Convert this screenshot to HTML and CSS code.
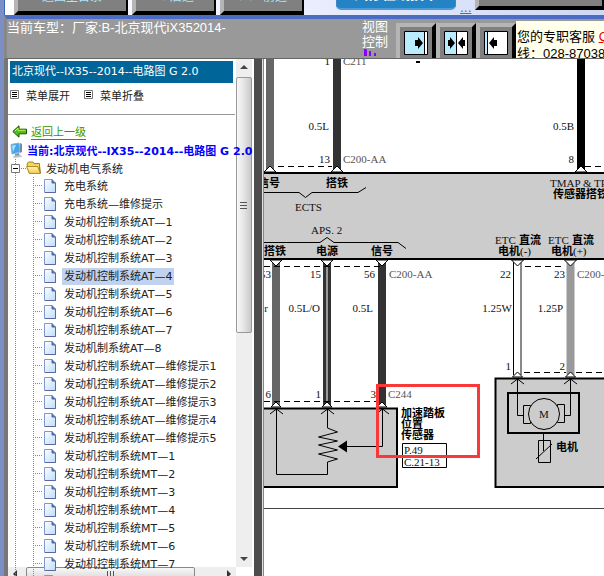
FILE: index.html
```html
<!DOCTYPE html>
<html lang="zh-CN">
<head>
<meta charset="utf-8">
<title>电路图</title>
<link rel="stylesheet" href="styles.css">
</head>
<body>
<svg class="defs" aria-hidden="true">
  <defs>
    <linearGradient id="paper" x1="0" y1="0" x2="1" y2="1"><stop offset="0" stop-color="#fff"/><stop offset="1" stop-color="#bcdcfa"/></linearGradient>
    <linearGradient id="gold" x1="0" y1="0" x2="0" y2="1"><stop offset="0" stop-color="#fff6b8"/><stop offset="1" stop-color="#f0cb4c"/></linearGradient>
    <symbol id="doc" viewBox="0 0 12 14"><path d="M.5.5H8L11.5 4v9.500H.5z" fill="url(#paper)" stroke="#7e97cf"/><path d="M8 .5V4h3.500" fill="#5a75b8" stroke="#4d66aa"/><path d="M11.500 4v9.500H1" fill="none" stroke="#5c66a0"/></symbol>
    <symbol id="list" viewBox="0 0 9 9"><path d="M.5.5h8v8h-8z" fill="#fff" stroke="#777"/><path d="M2 2.500h5M2 4.500h5M2 6.500h5" stroke="#000"/></symbol>
  </defs>
</svg>

<header class="topbar">
  <button class="nav-btn nav-home" type="button">返回主目录</button>
  <button class="nav-btn nav-step" type="button">&lt; 后退</button>
  <button class="nav-btn nav-step" type="button">&gt;&gt; 前进</button>
  <button class="pill" type="button">汽修在线技术</button>
  <a class="more" href="#">...</a>
  <button class="nav-btn nav-wide" type="button" aria-label="菜单"></button>
</header>

<section class="toolbar">
  <p class="model">当前车型：厂家:B-北京现代iX352014-</p>
  <div class="view-label">视图<br>控制
    <svg width="16" height="7" viewBox="0 0 16 7"><path d="M2 0h2l1 1v6H2zM7 2h2v5H7zM12 4h2v3h-2z" fill="#80f"/></svg>
  </div>
  <div class="views">
    <button class="view-btn" type="button" aria-label="左侧视图"><svg width="24" height="24" viewBox="0 0 24 24"><path d="M.5.5h23v23H.5z" fill="#fff" stroke="#000"/><path d="M1 1h19v22H1z" fill="#b9ecff"/><path d="M20.500 1v22" stroke="#000"/><path d="M11 9h3V6l5 6-5 6v-3h-3z"/></svg></button>
    <button class="view-btn" type="button" aria-label="并排视图"><svg width="24" height="24" viewBox="0 0 24 24"><path d="M.5.5h23v23H.5z" fill="#fff" stroke="#000"/><path d="M1 1h11v22H1z" fill="#b9ecff"/><path d="M12.500 1v22" stroke="#000"/><path d="M4 9h2V6l5 6-5 6v-3H4zM21 9h-2V6l-5 6 5 6v-3h2z"/></svg></button>
    <button class="view-btn" type="button" aria-label="右侧视图"><svg width="24" height="24" viewBox="0 0 24 24"><path d="M.5.5h23v23H.5z" fill="#fff" stroke="#000"/><path d="M1 1h2v22H1z" fill="#b9ecff"/><path d="M3.500 1v22" stroke="#000"/><path d="M13 9h-3V6l-5 6 5 6v-3h3z"/></svg></button>
  </div>
  <div class="service">您的专职客服 <a href="#">QQ</a><br>线：028-87038200</div>
</section>

<main class="workspace">
  <nav class="sidebar">
    <div class="side-content">
      <h1>北京现代--IX35--2014--电路图 G 2.0</h1>
      <div class="menu">
        <button type="button"><svg width="9" height="9"><use href="#list"/></svg>菜单展开</button>
        <button type="button"><svg width="9" height="9"><use href="#list"/></svg>菜单折叠</button>
      </div>
      <div class="back">
        <svg width="16" height="13" viewBox="0 0 16 13"><path d="M.8 6.500 7 .8v3.400h7.500v4.600H7v3.400z" fill="#4fc020" stroke="#1b5205"/><path d="M3 6 6 3v2.300h7.500" fill="none" stroke="#c8f24a"/></svg>
        <a href="#">返回上一级</a>
      </div>
      <div class="current">
        <svg width="14" height="17" viewBox="0 0 14 17"><path d="M1 2.500 9 1l1 9-8 2z" fill="#43a5ec" stroke="#8ab0d0"/><path d="M2 3.500 6 3 3 10z" fill="#a8e4ff"/><path d="m10 1 2 1v8l-2 1z" fill="#6f8ba8"/><path d="m5 12 4-1 1 3H5z" fill="#8191a6"/><path d="m3 14 8-1 1 2-8 1z" fill="#b9c5d2"/></svg>
        当前:北京现代--IX35--2014--电路图 G 2.0
      </div>
      <div class="tree">
        <div class="folder">
          <svg class="toggle" width="15" height="9" viewBox="0 0 15 9"><path d="M.5.5h8v8h-8z" fill="#fff" stroke="#777"/><path d="M2 4.500h5" stroke="#000"/><path d="M10 4.500h5" stroke="#888" stroke-dasharray="1 1"/></svg>
          <svg width="16" height="14" viewBox="0 0 16 14"><path d="M1 3 2.500 1H7l1 1.500h5.500V12H3z" fill="#f3d464" stroke="#a98016"/><path d="M.6 5.500h11L14.500 12.500H3.500z" fill="url(#gold)" stroke="#b98d1c"/><path d="M13.500 4.500 14.500 12" stroke="#a98016"/></svg>
          <a href="#">发动机电气系统</a>
        </div>
        <ul>
          <li><svg class="doc"><use href="#doc"/></svg><a href="#">充电系统</a></li>
          <li><svg class="doc"><use href="#doc"/></svg><a href="#">充电系统—维修提示</a></li>
          <li><svg class="doc"><use href="#doc"/></svg><a href="#">发动机控制系统AT—1</a></li>
          <li><svg class="doc"><use href="#doc"/></svg><a href="#">发动机控制系统AT—2</a></li>
          <li><svg class="doc"><use href="#doc"/></svg><a href="#">发动机控制系统AT—3</a></li>
          <li><svg class="doc"><use href="#doc"/></svg><a class="selected" href="#">发动机控制系统AT—4</a></li>
          <li><svg class="doc"><use href="#doc"/></svg><a href="#">发动机控制系统AT—5</a></li>
          <li><svg class="doc"><use href="#doc"/></svg><a href="#">发动机控制系统AT—6</a></li>
          <li><svg class="doc"><use href="#doc"/></svg><a href="#">发动机控制系统AT—7</a></li>
          <li><svg class="doc"><use href="#doc"/></svg><a href="#">发动机制系统AT—8</a></li>
          <li><svg class="doc"><use href="#doc"/></svg><a href="#">发动机控制系统AT—维修提示1</a></li>
          <li><svg class="doc"><use href="#doc"/></svg><a href="#">发动机控制系统AT—维修提示2</a></li>
          <li><svg class="doc"><use href="#doc"/></svg><a href="#">发动机控制系统AT—维修提示3</a></li>
          <li><svg class="doc"><use href="#doc"/></svg><a href="#">发动机控制系统AT—维修提示4</a></li>
          <li><svg class="doc"><use href="#doc"/></svg><a href="#">发动机控制系统AT—维修提示5</a></li>
          <li><svg class="doc"><use href="#doc"/></svg><a href="#">发动机控制系统MT—1</a></li>
          <li><svg class="doc"><use href="#doc"/></svg><a href="#">发动机控制系统MT—2</a></li>
          <li><svg class="doc"><use href="#doc"/></svg><a href="#">发动机控制系统MT—3</a></li>
          <li><svg class="doc"><use href="#doc"/></svg><a href="#">发动机控制系统MT—4</a></li>
          <li><svg class="doc"><use href="#doc"/></svg><a href="#">发动机控制系统MT—5</a></li>
          <li><svg class="doc"><use href="#doc"/></svg><a href="#">发动机控制系统MT—6</a></li>
          <li><svg class="doc"><use href="#doc"/></svg><a href="#">发动机控制系统MT—7</a></li>
          <li><svg class="doc"><use href="#doc"/></svg></li>
        </ul>
      </div>
    </div>
    <div class="vbar">
      <svg width="16" height="16" viewBox="0 0 16 16"><path d="m4 10 4-4 4 4z" fill="#444"/></svg>
      <div class="vthumb"><svg width="8" height="9" viewBox="0 0 8 9"><path d="M0 1.500h7M0 4.500h7M0 7.500h7" stroke="#555"/></svg></div>
      <svg width="16" height="16" viewBox="0 0 16 16"><path d="m4 6 4 4 4-4z" fill="#444"/></svg>
    </div>
    <div class="hbar">
      <svg width="18" height="16" viewBox="0 0 18 16"><path d="m9 3-4 4 4 4z" fill="#333"/></svg>
      <div class="hthumb"><svg width="9" height="8" viewBox="0 0 9 8"><path d="M1.500 0v7M4.500 0v7M7.500 0v7" stroke="#555"/></svg></div>
      <svg width="16" height="16" viewBox="0 0 16 16"><path d="m7 3 4 4-4 4z" fill="#333"/></svg>
    </div>
  </nav>
  <div class="divider"></div>
  <section class="diagram">
    <svg class="circuit" viewBox="264 59 600 517" width="600" height="517">
      <path d="M260 173h610v86H260z" fill="#ccc"/>
      <path d="M260 173h610M260 259h610" stroke="#000" stroke-width="2"/>
      <path d="M260 508.500h610" stroke="#444"/>
      <path d="M416 61h4v2h-4z"/>

      <g class="wires">
        <path d="M270 59v112" stroke="#666"/><path d="M337 59v112" stroke="#333"/><path d="M581 59v112" stroke="#000"/>
        <path d="M276 260v146" stroke="#666"/><path d="M327 260v146" stroke="#333"/><path d="M382 260v146" stroke="#333"/>
        <path d="M570.500 260v115" stroke="#999"/>
      </g>
      <path d="M327 260v146" stroke="#999" stroke-width="2"/>
      <path d="M513.500 260v115" stroke="#000"/><path d="M521 260v115" stroke="#888" stroke-width="2"/>

      <path class="dash" d="M278 166.500h54M585 166.500h60M264 266.500h116M525 266.500h39M264 401.500h114M524 372.500h42M576 372.500h60"/>

      <path d="M260 408.500h137V487H260z" fill="#ccc" stroke="#000" stroke-width="2"/>
      <path d="M495.500 378.500H700V487H495.500z" fill="#ccc" stroke="#000" stroke-width="2"/>

      <path class="pin" d="m264 172 6-6 6 6zM331 172l6-6 6 6zM575 172l6-6 6 6zM270 260l6 6 6-6zM321 260l6 6 6-6zM376 260l6 6 6-6zM511.500 260l6 6 6-6zM564.500 260l6 6 6-6zM271 407l5-5 5 5zM322 407l5-5 5 5zM377 407l5-5 5 5zM512.500 377l5-5 5 5zM565.500 377l5-5 5 5z"/>

      <g class="line">
        <path d="M260 192.500h39l6.500 5 6.500-5h46l8-5"/>
        <path d="M260 242.500h60l7-5 7 5h64l8 6"/>
        <path d="M276.500 409v65.500H327.500V462l10-3-19-5 19-4-19-5 19-4-19-4 19-5-10-4V409M270 414l6.500-5 6.500 5M321 414l6.500-5 6.500 5M376 414l6.500-5 6.500 5M382.500 409v37.500H346"/>
        <path d="M517.500 379v36.500h5.500M570.500 379v36.500H565M511 384l6.500-5 6.500 5M564 384l6.500-5 6.500 5"/>
        <path d="M523.500 405.500h7v18h-7zM557.500 404.500h7v18h-7z"/>
        <circle cx="544" cy="414" r="15.500" fill="#ccc"/>
        <path d="M538.500 440.500h12v22h-12zM543.500 433v18M536 459l16-15"/>
      </g>
      <path d="M508 393h71v40h-71z" fill="none" stroke="#000" stroke-width="2"/>
      <path d="m338 446.500 9-6v12z"/>
      <path class="line" d="M402.500 443.500h44v24h-44zM402.500 456.500h44"/>

      <g class="num">
        <text x="330" y="65" text-anchor="end">1</text><text class="soft" x="343" y="65">C211</text>
        <text x="329" y="130" text-anchor="end">0.5L</text><text x="574" y="130" text-anchor="end">0.5B</text>
        <text x="330" y="163" text-anchor="end">13</text><text class="soft" x="343" y="163">C200-AA</text><text x="574" y="163" text-anchor="end">8</text>
        <text x="295" y="211">ECTS</text><text x="311" y="234">APS. 2</text>
        <text x="550" y="187">TMAP &amp; TPS</text>
        <text x="495" y="244">ETC</text><text x="548" y="244">ETC</text>
        <text x="271" y="278" text-anchor="end">53</text><text x="321" y="278" text-anchor="end">15</text><text x="375" y="278" text-anchor="end">56</text><text class="soft" x="389" y="278">C200-AA</text>
        <text x="511" y="278" text-anchor="end">22</text><text x="565" y="278" text-anchor="end">23</text><text class="soft" x="577" y="278">C200-AA</text>
        <text x="268" y="312" text-anchor="end">Br</text><text x="320" y="312" text-anchor="end">0.5L/O</text><text x="373" y="312" text-anchor="end">0.5L</text>
        <text x="512" y="312" text-anchor="end">1.25W</text><text x="563" y="312" text-anchor="end">1.25P</text>
        <text x="511" y="370" text-anchor="end">1</text><text x="565" y="370" text-anchor="end">2</text>
        <text x="271" y="398" text-anchor="end">6</text><text x="321" y="398" text-anchor="end">1</text><text x="376" y="398" text-anchor="end">3</text><text class="soft" x="388" y="398">C244</text>
        <text x="404" y="454">P.49</text><text x="404" y="466">C.21-13</text>
        <text x="544" y="418" text-anchor="middle">M</text>
      </g>
      <g class="cjk">
        <text x="258" y="187">信号</text><text x="326" y="187">搭铁</text><text x="553" y="198">传感器搭铁</text>
        <text x="264" y="255">搭铁</text><text x="316" y="255">电源</text><text x="371" y="255">信号</text>
        <text x="519" y="244">直流</text><text x="572" y="244">直流</text>
        <text x="498" y="255">电机<tspan class="paren">(-)</tspan></text><text x="551" y="255">电机<tspan class="paren">(+)</tspan></text>
        <text x="401" y="417">加速踏板</text><text x="401" y="428">位置</text><text x="401" y="439">传感器</text><text x="556" y="451">电机</text>
      </g>
      <path d="M377.500 385.500h101v71h-101z" fill="none" stroke="#f93838" stroke-width="3"/>
    </svg>
  </section>
</main>
</body>
</html>
```
FILE: styles.css
```css
* { box-sizing: border-box; }

body {
  margin: 0;
  height: 100vh;
  overflow: hidden;
  display: grid;
  grid-template-columns: minmax(0, 1fr);
  grid-template-rows: 15px 44px minmax(0, 1fr);
  border-left: 4px solid #7b8fc6;
  background: #999;
  font-family: "DejaVu Sans", "Noto Sans CJK SC", sans-serif;
  font-size: 11px;
  color: #222;
}

button { font: inherit; color: inherit; margin: 0; padding: 0; }
svg { flex: none; display: block; }
.defs { position: absolute; width: 0; height: 0; }

/* Top button strip */
.topbar {
  display: flex;
  align-items: flex-end;
  gap: 4px;
  padding-left: 9px;
  overflow: hidden;
  border-left: 1px solid #3e62c0;
  background: linear-gradient(90deg, #fff, #f0f2ff 40%, #ccd8f5);
}
.nav-btn {
  flex: none;
  height: 32px;
  border: 4px solid;
  border-color: #b5b5b5 #000 #000 #b5b5b5;
  border-right-width: 2px;
  background: #808080;
  color: #a9e6fb;
  font-size: 12px;
  line-height: 16px;
  padding-bottom: 4px;
}
.nav-home { width: 114px; }
.nav-step { width: 84px; }
.nav-wide { flex: 1; align-self: flex-start; height: 10px; border-top: 0; }
.pill {
  flex: none;
  width: 120px;
  height: 32px;
  margin: 0 0 5px 28px;
  border: 1px solid #3f86c8;
  border-bottom: 2px solid #4c9ad8;
  border-radius: 5px;
  background: #2383c4;
  color: #fff;
  font-size: 14px;
  font-weight: bold;
  line-height: 16px;
}
.more { color: #1a7ad0; font-size: 12px; line-height: 14px; }

/* Vehicle and view controls */
.toolbar {
  display: flex;
  overflow: hidden;
  border-top: 4px solid #4a6cc4;
  border-bottom: 1px solid #666;
  border-left: 3px solid #888;
  background: #999;
  color: #fff;
  font-family: "Liberation Sans", "Noto Sans CJK SC", sans-serif;
  font-size: 13px;
}
.model { flex: none; width: 355px; margin: 0; line-height: 17px; }
.view-label { flex: none; width: 34px; line-height: 15px; }
.views { flex: none; display: flex; padding-top: 4px; }
.view-btn {
  width: 40px;
  height: 40px;
  border: 4px solid;
  border-color: #b5b5b5 #000 #000 #b5b5b5;
  background: #808080;
  padding: 3px 4px;
}
.service {
  flex: 1;
  margin-top: 2px;
  padding: 7px 1px;
  overflow: hidden;
  white-space: nowrap;
  background: #ffffec;
  color: #000;
  line-height: 17px;
}
.service a { color: #e00; }

/* Work area */
.workspace {
  display: grid;
  grid-template-columns: 246px 10px minmax(0, 1fr);
  grid-template-rows: minmax(0, 1fr);
  min-height: 0;
  border-left: 4px solid #777;
}
.sidebar {
  display: grid;
  grid-template-columns: minmax(0, 1fr) 16px 2px;
  grid-template-rows: minmax(0, 1fr) 9px;
  min-height: 0;
  overflow: hidden;
  background: #fff;
}
.side-content { position: relative; z-index: 1; min-width: 0; min-height: 0; white-space: nowrap; }
h1 {
  margin: 2px 3px 0 2px;
  padding-left: 2px;
  height: 22px;
  background: #069;
  color: #fff;
  font-size: 11px;
  font-weight: normal;
  line-height: 21px;
}
.menu {
  display: flex;
  gap: 14px;
  height: 32px;
  margin-right: 1px;
  padding: 0 2px 8px;
  border-bottom: 1px solid #999;
}
.menu button { display: flex; align-items: center; gap: 7px; border: 0; background: none; }
.back { display: flex; align-items: center; gap: 3px; height: 26px; padding: 6px 0 0 4px; }
.back a { color: #390; text-decoration: underline; text-underline-offset: 3px; }
.current {
  display: flex;
  align-items: center;
  gap: 3px;
  height: 18px;
  padding-left: 2px;
  color: #00f;
  font-weight: bold;
}
.tree a { color: #222; text-decoration: none; }
.tree {
  background: repeating-linear-gradient(#888 0 1px, transparent 1px 2px) 7px 0 / 1px 100% no-repeat;
}
.folder { display: flex; align-items: center; height: 18px; padding-left: 3px; }
.folder a { padding-left: 4px; }
ul {
  margin: 0;
  padding: 0 0 0 25px;
  list-style: none;
  background: repeating-linear-gradient(#888 0 1px, transparent 1px 2px) 25px 0 / 1px 100% no-repeat;
}
li {
  display: flex;
  align-items: center;
  gap: 6px;
  height: 18px;
  padding-left: 11px;
  background: repeating-linear-gradient(90deg, #888 0 1px, transparent 1px 2px) 0 8px / 10px 1px no-repeat;
}
.doc { width: 12px; height: 14px; }
li a { padding: 0 2px; line-height: 17px; }
.selected { background: #c1d2ee; }

/* Scroll bars */
.vbar { grid-area: 1 / 2; display: flex; flex-direction: column; background: #eee; }
.vthumb {
  flex: none;
  display: grid;
  place-items: center;
  height: 256px;
  margin-top: 2px;
  border: 1px solid #999;
  border-radius: 2px;
  background: linear-gradient(90deg, #f8f8f8, #e4e4e4 50%, #c8c8c8);
}
.vbar > svg:last-child { margin-top: auto; }
.hbar { grid-area: 2 / 1; display: flex; overflow: hidden; background: #eee; }
.hthumb {
  flex: none;
  display: grid;
  justify-items: center;
  align-items: start;
  width: 169px;
  height: 16px;
  padding-top: 3px;
  border: 1px solid #888;
  border-radius: 2px;
  background: linear-gradient(#f8f8f8, #d0d0d0);
}
.hbar > svg:last-child { margin-left: auto; }
.divider { border-left: 8px solid #4d4d4d; border-right: 1px solid #888; background: #ddd; }

/* Wiring drawing */
.diagram { min-width: 0; overflow: hidden; background: #fff; }
.wires path { stroke-width: 8; }
.dash { stroke: #000; stroke-dasharray: 6 4; }
.pin { fill: #fff; stroke: #000; }
.line { fill: none; stroke: #000; }
.num { font-family: "Liberation Serif", serif; font-size: 11px; fill: #111; }
.num .soft { fill: #555; }
.cjk { font-family: "Liberation Sans", "Noto Sans CJK SC", sans-serif; font-size: 11px; font-weight: bold; }
.paren { font-family: "Liberation Serif", serif; font-weight: normal; }
```
